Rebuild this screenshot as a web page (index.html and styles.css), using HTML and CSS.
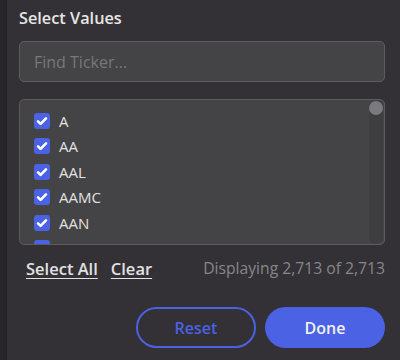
FILE: index.html
```html
<!DOCTYPE html>
<html lang="en">
<head>
    <meta charset="UTF-8">
    <meta name="viewport" content="width=device-width, initial-scale=1.0">
    <title>Select Values</title>
    <link rel="stylesheet" href="styles.css">
</head>
<body>
    <div class="page">
        <div class="side"></div>

        <div class="panel">
            <!-- Header -->
            <div class="panel-title">Select Values</div>

            <!-- Search -->
            <input type="text" class="search-box" placeholder="Find Ticker...">

            <!-- Value list -->
            <div class="value-list">
                <div class="value-items">
                    <label class="value-row"><span class="check"><svg viewBox="0 0 16 16"><path d="M4 8.3l2.6 2.6L12 5.4" /></svg></span>A</label>
                    <label class="value-row"><span class="check"><svg viewBox="0 0 16 16"><path d="M4 8.3l2.6 2.6L12 5.4" /></svg></span>AA</label>
                    <label class="value-row"><span class="check"><svg viewBox="0 0 16 16"><path d="M4 8.3l2.6 2.6L12 5.4" /></svg></span>AAL</label>
                    <label class="value-row"><span class="check"><svg viewBox="0 0 16 16"><path d="M4 8.3l2.6 2.6L12 5.4" /></svg></span>AAMC</label>
                    <label class="value-row"><span class="check"><svg viewBox="0 0 16 16"><path d="M4 8.3l2.6 2.6L12 5.4" /></svg></span>AAN</label>
                    <label class="value-row"><span class="check"><svg viewBox="0 0 16 16"><path d="M4 8.3l2.6 2.6L12 5.4" /></svg></span>AAOI</label>
                    <label class="value-row"><span class="check"><svg viewBox="0 0 16 16"><path d="M4 8.3l2.6 2.6L12 5.4" /></svg></span>AAON</label>
                </div>
                <div class="scroll-track"><div class="scroll-thumb"></div></div>
            </div>

            <!-- Links and count -->
            <div class="list-footer">
                <a class="link" href="#">Select All</a>
                <a class="link" href="#">Clear</a>
                <span class="count">Displaying 2,713 of 2,713</span>
            </div>

            <!-- Actions -->
            <div class="actions">
                <button class="btn btn-outline">Reset</button>
                <button class="btn btn-primary">Done</button>
            </div>
        </div>
    </div>
</body>
</html>
```

FILE: styles.css
```css
body {
    margin: 0;
    background: #252427;
    font-family: "Open Sans", Lato, sans-serif;
    width: 400px;
    height: 360px;
    overflow: hidden;
}

.page {
    display: flex;
    height: 360px;
}

.side {
    width: 6px;
    background: #262528;
    border-right: 1px solid #1f1e21;
}

.panel {
    flex: 1;
    background: #333135;
    padding: 8px 15px 0 12px;
    display: flex;
    flex-direction: column;
}

/* Header */
.panel-title {
    color: #e6e6e6;
    font-size: 16.3px;
    font-weight: 600;
    line-height: 20px;
    margin-bottom: 13px;
}

/* Search */
.search-box {
    height: 41px;
    box-sizing: border-box;
    background: #444346;
    border: 1px solid #5d5c60;
    border-radius: 5px;
    padding: 0 14px;
    color: #ddd;
    font-family: inherit;
    font-size: 16px;
    outline: none;
    margin: 0 0 17px 0;
}

.search-box::placeholder {
    color: #78777b;
}

/* Value list */
.value-list {
    position: relative;
    height: 146px;
    box-sizing: border-box;
    background: #444346;
    border: 1px solid #5d5c60;
    border-radius: 5px;
    overflow: hidden;
}

.value-items {
    padding: 8px 0 0 14px;
}

.value-row {
    display: flex;
    align-items: center;
    height: 25.5px;
    color: #e2e2e2;
    font-size: 15px;
    font-weight: 500;
}

.check {
    width: 16px;
    height: 16px;
    border-radius: 3px;
    background: #4a62e3;
    margin-right: 9px;
    display: flex;
}

.check svg {
    width: 16px;
    height: 16px;
    fill: none;
    stroke: white;
    stroke-width: 2.6;
    stroke-linecap: round;
    stroke-linejoin: round;
}

/* Scrollbar */
.scroll-track {
    position: absolute;
    top: 0;
    right: 1px;
    bottom: 0;
    width: 14px;
    background: #3e3d40;
    border-radius: 7px;
}

.scroll-thumb {
    width: 14px;
    height: 14px;
    margin-top: 1px;
    border-radius: 50%;
    background: #7a797d;
}

/* Links and count */
.list-footer {
    display: flex;
    align-items: center;
    height: 22px;
    margin: 12px 0 0 7px;
    font-size: 15.7px;
}

.link {
    color: #e2e2e2;
    font-size: 16.5px;
    font-weight: 600;
    text-decoration: underline;
    text-underline-offset: 3px;
    margin-right: 13px;
}

.count {
    margin-left: auto;
    color: #87868a;
}

/* Actions */
.actions {
    display: flex;
    justify-content: flex-end;
    gap: 9px;
    margin-top: 28px;
}

.btn {
    width: 120px;
    height: 41px;
    border-radius: 21px;
    font-family: inherit;
    font-size: 16px;
    font-weight: 600;
    cursor: pointer;
    box-sizing: border-box;
}

.btn-outline {
    background: transparent;
    border: 2px solid #4a62e3;
    color: #4a62e3;
}

.btn-primary {
    background: #4a62e3;
    border: none;
    color: #f2f2f2;
}
```
